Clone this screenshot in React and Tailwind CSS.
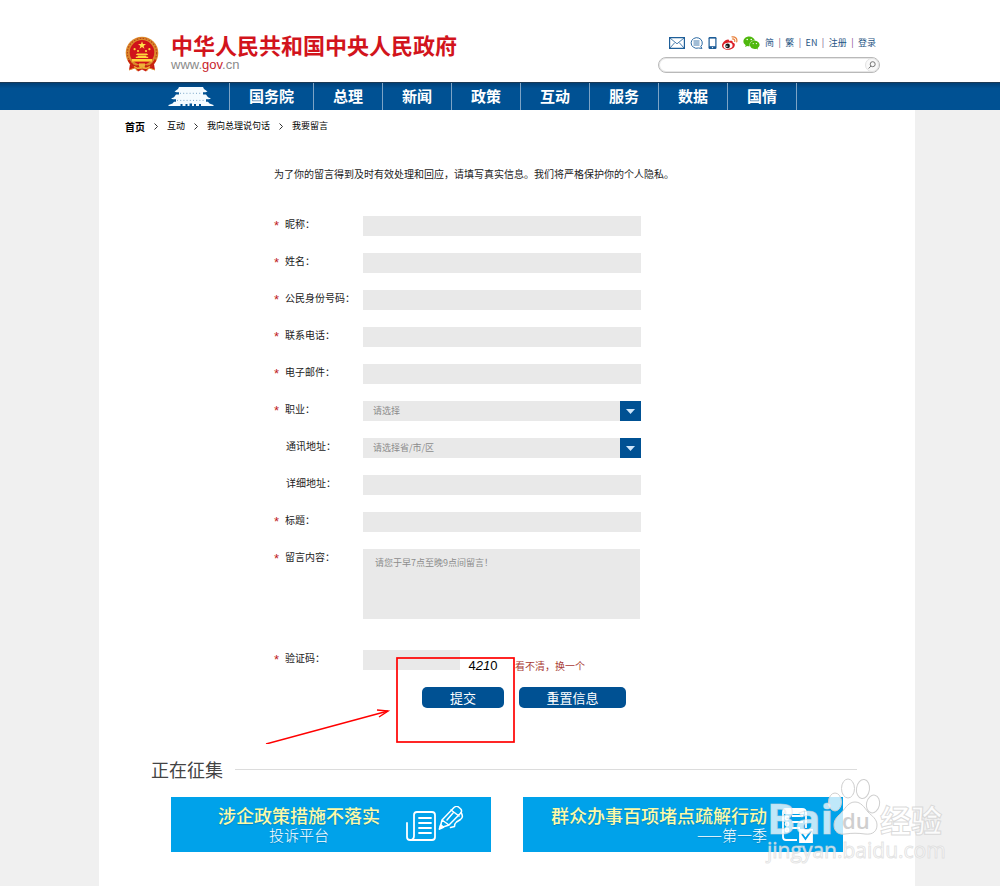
import React from "react";
import { FaWeixin } from "react-icons/fa";

const navItems = ["总理", "新闻", "政策", "互动", "服务", "数据", "国情"];

const wrap = "mx-auto w-full max-w-[816px]";

function Emblem() {
  return (
    <svg className="mt-1 h-9 w-[34px] shrink-0" viewBox="0 0 34 36" aria-hidden="true">
      <path d="M5 28 L4 34 L10 32 L13 35.5 L17 33.5 L21 35.5 L24 32 L30 34 L29 28 Z" fill="#c91a12" />
      <path d="M4 34 L10 32 L12.5 35 M30 34 L24 32 L21.5 35" stroke="#e0912f" strokeWidth="1" fill="none" />
      <circle cx="17" cy="17" r="16.3" fill="#dc8a2c" />
      <circle cx="17" cy="17" r="14.6" fill="none" stroke="#b8401a" strokeWidth="1.1" strokeDasharray="1.6 1.4" />
      <circle cx="17" cy="16.4" r="12.3" fill="#d0121b" />
      <path d="M17 5.2l1 2.9h3l-2.4 1.8.9 2.9-2.5-1.8-2.5 1.8.9-2.9L13 8.1h3z" fill="#ffe04a" />
      <g fill="#ffd43c">
        <circle cx="9.6" cy="13.2" r="1.1" />
        <circle cx="13" cy="15" r="1.1" />
        <circle cx="21" cy="15" r="1.1" />
        <circle cx="24.4" cy="13.2" r="1.1" />
        <path d="M12 17.4h10l1.2 1.6H10.8zM12.6 19.5h8.8v1.2h1.8v1.2H10.8v-1.2h1.8z" />
        <path d="M7 23h20v2.6H7z" />
      </g>
      <path d="M14 27.4h6v3.4h-6z" fill="#efb23a" />
      <path d="M3.5 24c3 5.5 7 7.5 10.5 6M30.5 24c-3 5.5-7 7.5-10.5 6" stroke="#c8210f" strokeWidth="2" fill="none" />
      <path d="M9 30.5l4 2 4-1.5 4 1.5 4-2" stroke="#f0b13a" strokeWidth="1.2" fill="none" />
    </svg>
  );
}

function Gate() {
  return (
    <svg className="h-[19px] w-[46px]" viewBox="0 0 46 19" fill="#f4fbff" aria-hidden="true">
      <path d="M11 0h24l1 2 3.5 2.6-2 .6H8.5l-2-.6L10 2z" />
      <path d="M11 5h24v3H11z" />
      <path d="M8 7.6h30l2 2.6 3 1.2-2 .8H5l-2-.8 3-1.2z" />
      <path d="M8 12h30v3H8z" />
      <path d="M6 14.7h34l1.5 1.8 4 1.5v1H33v-2h-2v2h-3v-2h-2v2h-2v-2.4h-2.5V19h-2v-2h-2v2h-3v-2h-2v2H.5v-1l4-1.5z" />
      <path d="M12 6.3h22M9 13.4h28" stroke="#00508f" strokeWidth=".5" strokeDasharray="1 2.2" />
    </svg>
  );
}

function MailIcon() {
  return (
    <svg className="h-3 w-4" viewBox="0 0 16 12" fill="none" stroke="#1f5f99" aria-hidden="true">
      <path d="M.6.6h14.8v10.8H.6z" strokeWidth="1.2" />
      <path d="M.7.8L8 6.8 15.3.8M.8 11.2l5-5.6M15.2 11.2l-5-5.6" strokeWidth=".8" />
    </svg>
  );
}

function ChatIcon() {
  return (
    <svg className="h-3 w-[13px]" viewBox="0 0 13 12" fill="none" stroke="#2d6ba3" aria-hidden="true">
      <path d="M10.8 9.6A5.6 5.3 0 1 0 8.5 11l3.5.4z" />
      <path d="M3.5 4h6M3.5 6h6M3.5 8h6" strokeWidth=".9" />
    </svg>
  );
}

function PhoneIcon() {
  return (
    <svg className="h-3 w-[9px]" viewBox="0 0 9 12" aria-hidden="true">
      <rect x=".5" width="8" height="12" rx="1.2" fill="#1b5b96" />
      <path d="M1.7 1.6h5.6v7.6H1.7z" fill="#fff" />
      <circle cx="4.5" cy="10.6" r=".7" fill="#fff" />
    </svg>
  );
}

function WeiboIcon() {
  return (
    <svg className="h-[14px] w-4" viewBox="0 0 16 14" aria-hidden="true">
      <path d="M0 9.5C0 7 3.5 3.6 6 3.6c1.2 0 1.4.8 1.1 1.7 2-.8 4-.6 3.6 1.3 1.7.4 2.3 1.3 2.1 2.6C12.4 12 9.3 13.7 6 13.7S0 12.2 0 9.5z" fill="#dc1f27" />
      <ellipse cx="6" cy="9.7" rx="4.6" ry="3.1" fill="#fff" transform="rotate(-8 6 9.7)" />
      <circle cx="5.6" cy="9.9" r="2.3" fill="#151515" />
      <circle cx="4.9" cy="10.3" r=".7" fill="#fff" />
      <path d="M10 .9c3.2-.6 5.6 1.9 4.7 5M10.4 3c1.7-.3 2.8.9 2.3 2.5" stroke="#e9803a" strokeWidth="1.2" fill="none" strokeLinecap="round" />
    </svg>
  );
}

function Header() {
  return (
    <header className="pl-[14px]">
      <div className={`${wrap} flex h-[82px] items-start justify-between pl-[26px] pr-[35px]`}>
        <a href="#" className="flex items-start pt-8">
          <Emblem />
          <span className="ml-3 block">
            <span className="block text-[22px] font-bold leading-6 text-[#d2141c]">中华人民共和国中央人民政府</span>
            <span className="block font-['Liberation_Sans',sans-serif] text-[13px] leading-[18px] text-[#8a8a8a]">
              www.<span className="text-[#c8232c]">gov</span>.cn
            </span>
          </span>
        </a>
        <div className="w-[222px] pt-9">
          <div className="flex h-[14px] items-center gap-[5px] pl-[11px] pr-1 text-[9px] leading-[14px] text-[#1f5584]">
            <a href="#" aria-label="邮箱"><MailIcon /></a>
            <a href="#" aria-label="消息"><ChatIcon /></a>
            <a href="#" aria-label="手机版"><PhoneIcon /></a>
            <a href="#" aria-label="微博"><WeiboIcon /></a>
            <a href="#" aria-label="微信"><FaWeixin className="h-4 w-[17px] text-[#4fb80d]" /></a>
            <span className="flex flex-1 items-center justify-between">
              <a href="#">简</a>
              <span className="text-[#7a4a86]">|</span>
              <a href="#">繁</a>
              <span className="text-[#7a4a86]">|</span>
              <a href="#">EN</a>
              <span className="text-[#7a4a86]">|</span>
              <a href="#">注册</a>
              <span className="text-[#7a4a86]">|</span>
              <a href="#">登录</a>
            </span>
          </div>
          <form className="mt-[7px] flex h-4 items-center rounded-full border border-[#b9b9b9] bg-white shadow-[inset_0_0_0_1px_#e6e6e6]" onSubmit={(e) => e.preventDefault()}>
            <input type="search" aria-label="搜索" className="h-3 min-w-0 flex-1 bg-transparent px-2 text-[9px] outline-none" />
            <button type="submit" aria-label="搜索" className="flex size-[14px] items-center justify-center rounded-full border border-[#e2e2e2] bg-[#f9f9f9]">
              <svg className="size-2" viewBox="0 0 8 8" fill="none" stroke="#777" aria-hidden="true">
                <circle cx="4.7" cy="3.2" r="2.5" />
                <path d="M3 5L.6 7.5" />
              </svg>
            </button>
          </form>
        </div>
      </div>
    </header>
  );
}

function Nav() {
  return (
    <nav className="h-7 border-t border-[#1c3a55] bg-[#005193] bg-linear-to-b from-[#004077] to-[#005193] to-20% pl-[14px]">
      <div className={`${wrap} flex h-[27px] text-[15px] font-bold text-white`}>
        <a href="#" aria-label="首页" className="flex w-[130px] items-center pl-[69px]"><Gate /></a>
        <a href="#" className="flex w-[84px] items-center justify-center border-l border-[#7da4c6]">国务院</a>
        {navItems.map((n) => (
          <a key={n} href="#" className="flex w-[69px] items-center justify-center border-l border-[#7da4c6]">{n}</a>
        ))}
        <span className="border-l border-[#7da4c6]" />
      </div>
    </nav>
  );
}

function Chevron() {
  return (
    <svg className="h-[7px] w-1" viewBox="0 0 4 7" fill="none" stroke="#333" aria-hidden="true">
      <path d="M.5.5l3 3-3 3" />
    </svg>
  );
}

function Breadcrumb() {
  return (
    <nav className="flex h-8 items-center gap-[9px] pl-[26px] text-[9px] text-black">
      <a href="#" className="text-[10px] font-bold">首页</a>
      <Chevron />
      <a href="#">互动</a>
      <Chevron />
      <a href="#">我向总理说句话</a>
      <Chevron />
      <a href="#">我要留言</a>
    </nav>
  );
}

function Row({ id, label, required = true, children }) {
  return (
    <div className="flex items-start">
      <label htmlFor={id} className="flex w-[89px] shrink-0 leading-4">
        <span className={required ? "w-[11px] pt-0.5 font-['Liberation_Sans',sans-serif] text-[13px] leading-4 text-[#c0201c]" : "w-3"}>{required ? "*" : ""}</span>
        {label}：
      </label>
      {children}
    </div>
  );
}

function TextField({ id, label, required }) {
  return (
    <Row id={id} label={label} required={required}>
      <input id={id} type="text" className="h-5 w-[278px] bg-[#e9e9e9] px-2 outline-none" />
    </Row>
  );
}

function SelectField({ id, label, required, placeholder }) {
  return (
    <Row id={id} label={label} required={required}>
      <div className="relative h-5 w-[278px]">
        <select id={id} className="block h-5 w-full appearance-none bg-[#e9e9e9] pl-2.5 pr-6 text-[9px] text-[#8c8c8c] outline-none">
          <option>{placeholder}</option>
        </select>
        <span className="pointer-events-none absolute inset-y-0 right-0 flex w-[21px] items-center justify-center bg-[#005193]">
          <svg className="h-[5px] w-[9px]" viewBox="0 0 9 5" fill="#cfe6fa" aria-hidden="true">
            <path d="M0 0h9L4.5 5z" />
          </svg>
        </span>
      </div>
    </Row>
  );
}

function MessageForm() {
  return (
    <form className="relative mt-[34px] flex flex-col gap-[17px] pl-[175px] text-[10px] text-[#222]" onSubmit={(e) => e.preventDefault()}>
      <TextField id="nick" label="昵称" />
      <TextField id="name" label="姓名" />
      <TextField id="idno" label="公民身份号码" />
      <TextField id="tel" label="联系电话" />
      <TextField id="mail" label="电子邮件" />
      <SelectField id="job" label="职业" placeholder="请选择" />
      <SelectField id="region" label="通讯地址" required={false} placeholder="请选择省/市/区" />
      <TextField id="addr" label="详细地址" required={false} />
      <TextField id="title" label="标题" />
      <Row id="content" label="留言内容">
        <textarea id="content" placeholder="请您于早7点至晚9点间留言！" className="block h-[70px] w-[277px] resize-none bg-[#e9e9e9] px-3 py-2 text-[9px] leading-3 outline-none placeholder:text-[#8c8c8c]" />
      </Row>
      <div className="mt-3.5 h-5">
        <Row id="code" label="验证码">
          <input id="code" type="text" className="h-5 w-[97px] bg-[#e9e9e9] px-2 outline-none" />
          <span className="ml-2 w-[30px] pt-2 text-center font-['Liberation_Sans',sans-serif] text-[13px] leading-4 text-black">
            4<em>21</em>0
          </span>
          <a href="#" className="ml-[17px] pt-2 leading-4 text-[#a83a34]">看不清，换一个</a>
        </Row>
      </div>
      <div className="flex gap-[15px] pl-[148px] text-[13px] leading-[21px] text-white">
        <button type="submit" className="h-[21px] w-[82px] rounded-[5px] bg-[#005193]">提交</button>
        <button type="reset" className="h-[21px] w-[107px] rounded-[5px] bg-[#005193]">重置信息</button>
      </div>
      <Marker />
    </form>
  );
}

/* Red frame and arrow that point out the submit button. */
function Marker() {
  return (
    <svg className="pointer-events-none absolute -bottom-9 left-[166px] h-[88px] w-[252px]" viewBox="0 0 252 88" fill="none" stroke="#ff0000" aria-hidden="true">
      <rect x="132" y="2" width="117" height="84" strokeWidth="1.7" />
      <path d="M1 88L123 55" strokeWidth="1.5" />
      <path d="M112 54L123 55L114 61" strokeWidth="1.5" />
    </svg>
  );
}

function ScrollPenIcon() {
  return (
    <svg className="h-[38px] w-[58px]" viewBox="0 0 58 38" fill="none" stroke="#fff" strokeWidth="1.8" strokeLinecap="round" strokeLinejoin="round" aria-hidden="true">
      <path d="M8 30V9q0-3 3-3h15q3 0 3 3v22q0 3-3 3H4q-3 0-3-3V17M8 30q0 4-4 4" />
      <path d="M13 12h12M13 17h12M13 22h12M13 27h12" />
      <path d="M34 22l2-8L48 1.5q2.5-2 4.5-.5l2 1.7q2 2 .3 4.3L43 19zM36 14l7 5M45 4l8 6M41 14l6-7" strokeWidth="1.5" />
      <path d="M33.5 23l1.2-4 2.6 2.2z" fill="#fff" />
      <path d="M55 6.5q3 4.500-.5 7l-4 2.5q-2 1.5-2 4.5l-4 1" strokeWidth="1.5" />
    </svg>
  );
}

function ChecklistIcon() {
  return (
    <svg className="h-9 w-8" viewBox="0 0 32 36" fill="none" stroke="#fff" strokeWidth="1.8" aria-hidden="true">
      <path d="M16 33H5q-3 0-3-3V5q0-3 3-3h16q4 0 4 4v15" />
      <path d="M4 3h18v3H4z" fill="#fff" />
      <path d="M11 9h11M11 15h11M11 21h8" />
      <circle cx="6" cy="11" r="1.5" />
      <circle cx="6" cy="17" r="1.5" />
      <circle cx="6" cy="23" r="1.5" />
      <path d="M19 23h12v12H19z" fill="#fff" />
      <path d="M21 27l3.5 5L30 24" stroke="#00a2ea" />
    </svg>
  );
}

function Watermark() {
  return (
    <div className="pointer-events-none absolute -bottom-3 -right-[102px] h-[88px] w-[178px] text-white/75" aria-hidden="true">
      <svg className="absolute left-[58px] top-0.5 h-[62px] w-[60px]" viewBox="0 0 60 62" fill="currentColor" stroke="#cfcfcf">
        <ellipse cx="10" cy="24" rx="6.5" ry="9" />
        <ellipse cx="23" cy="10.5" rx="6.5" ry="9.5" />
        <ellipse cx="38" cy="11" rx="6.5" ry="9.5" transform="rotate(8 38 11)" />
        <ellipse cx="48" cy="26" rx="6.5" ry="9" transform="rotate(12 48 26)" />
        <path d="M30 24c-6 0-9 5-13 10-4 4-8 7-8 13 0 7 5 10 11 9 7-1 13-1 20 0 8 1 12-3 12-9 0-6-5-9-9-13-4-5-7-10-13-10z" />
      </svg>
      <span className="absolute left-0 top-[18px] font-['Open_Sans',sans-serif] text-[42px] font-bold leading-[48px] [-webkit-text-stroke:1px_#d6d6d680]">Bai</span>
      <span className="absolute left-[75px] top-8 font-['Open_Sans',sans-serif] text-[22px] font-semibold leading-6 text-[#cfcfcf]">du</span>
      <span className="absolute left-[113px] top-[27px] text-[31px] font-bold leading-8 [-webkit-text-stroke:1px_#cfcfcfc0]">经验</span>
      <span className="absolute left-0 top-[62px] font-['Open_Sans',sans-serif] text-[21px] leading-6 [-webkit-text-stroke:1px_#d0d0d090]">jingyan.baidu.com</span>
    </div>
  );
}

function Collecting() {
  return (
    <section className="mt-[47px] pl-[52px] pr-[58px]">
      <div className="flex items-center gap-3">
        <h2 className="text-[18px] leading-7 text-[#444]">正在征集</h2>
        <span className="h-px flex-1 bg-[#dcdcdc]" />
      </div>
      <div className="relative ml-5 mr-3.5 mt-3.5 grid grid-cols-2 gap-8">
        <a href="#" className="flex h-[55px] items-center bg-[#00a2ea] pl-[47px] [text-shadow:0_1px_1px_#00609066]">
          <span className="block text-center">
            <span className="block text-[18px] font-medium leading-5 text-[#fdf9a6]">涉企政策措施不落实</span>
            <span className="block text-[15px] font-light leading-5 text-white">投诉平台</span>
          </span>
          <span className="ml-[26px]"><ScrollPenIcon /></span>
        </a>
        <a href="#" className="flex h-[55px] items-center bg-[#00a2ea] pl-7 [text-shadow:0_1px_1px_#00609066]">
          <span className="block whitespace-nowrap text-right">
            <span className="block text-[18px] font-medium leading-5 text-[#fdf9a6]">群众办事百项堵点疏解行动</span>
            <span className="block text-[15px] font-light leading-5 text-white">——第一季</span>
          </span>
          <span className="ml-3.5"><ChecklistIcon /></span>
        </a>
        <Watermark />
      </div>
    </section>
  );
}

export default function App() {
  return (
    <div className="flex min-h-screen flex-col overflow-x-hidden bg-white font-['Noto_Sans_CJK_SC',sans-serif]">
      <Header />
      <Nav />
      <div className="flex flex-1 bg-[#f0f0f0] pl-[14px]">
        <main className={`${wrap} bg-white`}>
          <Breadcrumb />
          <p className="mt-6 pl-[175px] text-[10px] leading-4 text-[#222]">
            为了你的留言得到及时有效处理和回应，请填写真实信息。我们将严格保护你的个人隐私。
          </p>
          <MessageForm />
          <Collecting />
        </main>
      </div>
    </div>
  );
}
